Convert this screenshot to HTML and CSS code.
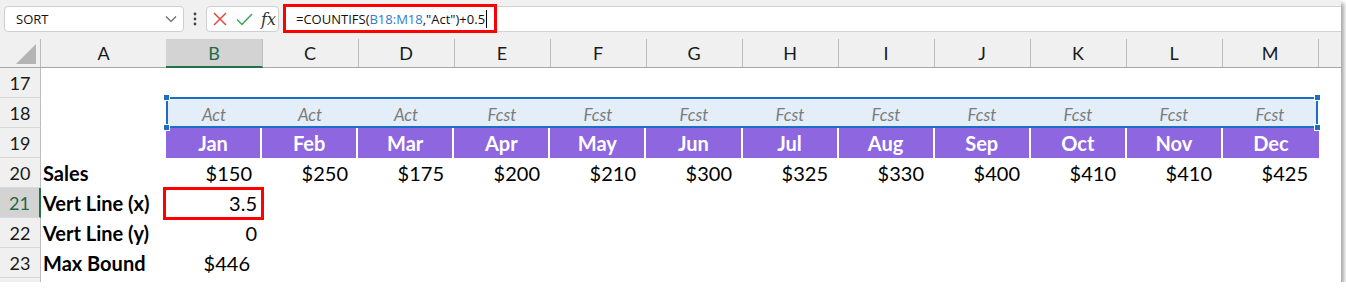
FILE: index.html
```
<!DOCTYPE html>
<html lang="en">
<head>
  <meta charset="UTF-8" />
  <title>COUNTIFS vertical line</title>
  <link rel="stylesheet" href="styles.css">
</head>
<body>
  <div class="sheet">
    <!-- Formula bar -->
    <div class="toolbar">
      <div class="namebox">
        <span>SORT</span>
        <svg width="12" height="8" viewBox="0 0 12 8"><path d="M1 1.5l5 5 5-5" fill="none" stroke="#666" stroke-width="1.2"/></svg>
      </div>
      <div class="more">
        <svg width="4" height="14" viewBox="0 0 4 14"><circle cx="2" cy="2" r="1.4" fill="#444"/><circle cx="2" cy="7" r="1.4" fill="#444"/><circle cx="2" cy="12" r="1.4" fill="#444"/></svg>
      </div>
      <div class="fxbox">
        <svg width="14" height="14" viewBox="0 0 14 14"><path d="M1 1l12 12M13 1L1 13" stroke="#e5473e" stroke-width="1.5" fill="none"/></svg>
        <svg width="17" height="13" viewBox="0 0 17 13"><path d="M1 6.5l5 5L16 1" stroke="#3aa55a" stroke-width="1.5" fill="none"/></svg>
        <span class="fx">fx</span>
      </div>
      <div class="formula">
        <span class="hl">=COUNTIFS(<span class="ref">B18:M18</span>,"Act")+0.5<span class="caret"></span></span>
      </div>
    </div>

    <!-- Column headers -->
    <div class="row colhead">
      <div class="corner"><span class="tri"></span></div>
      <div class="ch">A</div>
      <div class="ch on">B</div>
      <div class="ch">C</div>
      <div class="ch">D</div>
      <div class="ch">E</div>
      <div class="ch">F</div>
      <div class="ch">G</div>
      <div class="ch">H</div>
      <div class="ch">I</div>
      <div class="ch">J</div>
      <div class="ch">K</div>
      <div class="ch">L</div>
      <div class="ch">M</div>
      <div class="ch end"></div>
    </div>

    <div class="row">
      <div class="rh">17</div>
    </div>

    <div class="row">
      <div class="rh">18</div>
      <div class="cell"></div>
      <div class="sel">
        <div>Act</div><div>Act</div><div>Act</div><div>Fcst</div><div>Fcst</div><div>Fcst</div>
        <div>Fcst</div><div>Fcst</div><div>Fcst</div><div>Fcst</div><div>Fcst</div><div>Fcst</div>
        <span class="handle tl"></span><span class="handle bl"></span>
        <span class="handle tr"></span><span class="handle br"></span>
      </div>
    </div>

    <div class="row">
      <div class="rh">19</div>
      <div class="cell"></div>
      <div class="months">
        <div>Jan</div><div>Feb</div><div>Mar</div><div>Apr</div><div>May</div><div>Jun</div>
        <div>Jul</div><div>Aug</div><div>Sep</div><div>Oct</div><div>Nov</div><div>Dec</div>
      </div>
    </div>

    <div class="row">
      <div class="rh">20</div>
      <div class="cell label">Sales</div>
      <div class="cell num">$150</div>
      <div class="cell num">$250</div>
      <div class="cell num">$175</div>
      <div class="cell num">$200</div>
      <div class="cell num">$210</div>
      <div class="cell num">$300</div>
      <div class="cell num">$325</div>
      <div class="cell num">$330</div>
      <div class="cell num">$400</div>
      <div class="cell num">$410</div>
      <div class="cell num">$410</div>
      <div class="cell num">$425</div>
    </div>

    <div class="row">
      <div class="rh on">21</div>
      <div class="cell label">Vert Line (x)</div>
      <div class="cell num tight boxed">3.5</div>
    </div>

    <div class="row">
      <div class="rh">22</div>
      <div class="cell label">Vert Line (y)</div>
      <div class="cell num tight">0</div>
    </div>

    <div class="row">
      <div class="rh">23</div>
      <div class="cell label">Max Bound</div>
      <div class="cell num wide">$446</div>
    </div>

    <div class="row">
      <div class="rh"></div>
    </div>
  </div>
</body>
</html>
```

FILE: styles.css
```
body {
  margin: 0;
  background-color: #fff;
}
.sheet {
  width: 1341px;
  height: 282px;
  overflow: hidden;
  background-color: #fff;
  box-shadow: 3px 3px 4px rgba(0,0,0,0.35);
  font-family: Lato, "Liberation Sans", sans-serif;
}

/* formula bar */
.toolbar {
  height: 36px;
  background-color: #f0f0f0;
  display: flex;
  align-items: flex-start;
  padding-top: 6px;
  box-sizing: border-box;
  font-family: "Open Sans", "Noto Sans", sans-serif;
  font-size: 14px;
  color: #111;
}
.namebox {
  margin-left: 4px;
  width: 180px;
  height: 26px;
  box-sizing: border-box;
  background-color: #fff;
  border: 1px solid #cfcfcf;
  border-radius: 4px;
  display: flex;
  align-items: center;
  justify-content: space-between;
  padding: 0 6px 0 11px;
  font-size: 13px;
}
.more {
  width: 22px;
  height: 26px;
  display: flex;
  align-items: center;
  justify-content: center;
}
.fxbox {
  width: 73px;
  height: 26px;
  box-sizing: border-box;
  background-color: #fff;
  border: 1px solid #cfcfcf;
  border-radius: 4px;
  display: flex;
  align-items: center;
  gap: 9px;
  padding-left: 6px;
}
.fx {
  font-family: "DejaVu Serif", "Liberation Serif", serif;
  font-style: italic;
  font-size: 16px;
  color: #333;
  margin-left: -1px;
}
.formula {
  flex: 1;
  margin-left: 4px;
  height: 26px;
  box-sizing: border-box;
  background-color: #fff;
  border-top: 1px solid #d2d2d2;
  border-bottom: 1px solid #d2d2d2;
  position: relative;
}
.hl {
  position: absolute;
  left: 0;
  top: -3px;
  height: 29px;
  box-sizing: border-box;
  border: 3px solid #f00;
  padding: 0 7px 0 10px;
  display: flex;
  align-items: center;
  white-space: pre;
  font-size: 13px;
}
.ref {
  color: #2f7bcc;
}
.caret {
  display: inline-block;
  width: 1px;
  height: 18px;
  background-color: #000;
  margin-left: 1px;
}

/* grid rows */
.row {
  display: grid;
  grid-template-columns: 41px 125px repeat(12, 96px) 1fr;
  height: 30px;
}
.colhead {
  height: 32px;
  background-color: #f0f0f0;
  padding-top: 3px;
  box-sizing: border-box;
  border-bottom: 1px solid #a6a6a6;
}
.corner {
  position: relative;
  border-right: 1px solid #bdbdbd;
}
.tri {
  position: absolute;
  right: 4px;
  bottom: 3px;
  width: 0;
  height: 0;
  border-left: 20px solid transparent;
  border-bottom: 20px solid #b4b4b4;
}
.ch {
  border-right: 1px solid #bdbdbd;
  font-size: 18px;
  color: #1a1a1a;
  display: flex;
  align-items: center;
  justify-content: center;
  margin-right: -1px;
}
.ch.on {
  background-color: #d3d3d3;
  color: #1d6b40;
  border-bottom: 2px solid #217346;
  margin-bottom: -1px;
}
.ch.end {
  border-right: none;
}
.rh {
  background-color: #f0f0f0;
  border-right: 1px solid #bdbdbd;
  border-bottom: 1px solid #d8d8d8;
  font-size: 18px;
  color: #1a1a1a;
  display: flex;
  align-items: center;
  justify-content: center;
}
.rh.on {
  background-color: #d3d3d3;
  color: #1d6b40;
  border-right: 2px solid #217346;
}
.cell {
  font-size: 20px;
  color: #000;
  display: flex;
  align-items: center;
  white-space: nowrap;
  position: relative;
}
.label {
  font-weight: bold;
  padding-left: 2px;
}
.num {
  justify-content: flex-end;
  padding-right: 10px;
}
.num.tight {
  padding-right: 5px;
}
.num.wide {
  padding-right: 12px;
}
.boxed::after {
  content: "";
  position: absolute;
  top: -1px;
  bottom: -2px;
  left: -3px;
  right: -2px;
  border: 3px solid #f00;
}

/* selected range B18:M18 */
.sel {
  grid-column: 3 / 15;
  display: grid;
  grid-template-columns: repeat(12, 1fr);
  background-color: #e3eef8;
  position: relative;
  font-size: 17px;
  font-style: italic;
  color: #7b7b7b;
}
.sel::before {
  content: "";
  position: absolute;
  top: -1px;
  left: 0;
  right: 0;
  bottom: 0;
  border: 2px solid #1b6ec2;
}
.sel div {
  display: flex;
  align-items: center;
  justify-content: center;
  padding-top: 3px;
}
.handle {
  position: absolute;
  width: 5px;
  height: 5px;
  background-color: #1b6ec2;
  border: 1px solid #fff;
}
.handle.tl { left: -3px; top: -4px; }
.handle.bl { left: -3px; bottom: -3px; }
.handle.tr { right: -3px; top: -4px; }
.handle.br { right: -3px; bottom: -3px; }

/* month header row */
.months {
  grid-column: 3 / 15;
  display: grid;
  grid-template-columns: repeat(12, 1fr);
  margin-right: -1px;
}
.months div {
  background-color: #8d66e0;
  color: #fff;
  font-size: 20px;
  font-weight: bold;
  display: flex;
  align-items: center;
  justify-content: center;
  border-right: 2px solid #fff;
}
.months div:last-child {
  border-right: none;
}
```
